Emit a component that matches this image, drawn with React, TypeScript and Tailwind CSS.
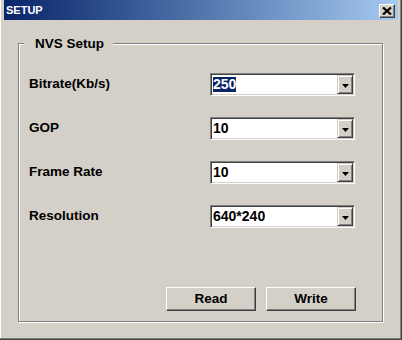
import React from "react";

const font = { fontFamily: '"Liberation Sans", Arial, sans-serif' };

function Combo({ value, selected }: { value: string; selected?: boolean }) {
  return (
    <div className="flex h-[23px] w-[145px] bg-white border border-t-[#808080] border-l-[#808080] border-b-white border-r-white shadow-[inset_1px_1px_0_#404040,inset_-1px_-1px_0_#d4d0c8] p-[1px]">
      <div className="flex flex-1 items-center pl-[1px]">
        <span
          className={
            selected
              ? "bg-[#0a246a] text-white text-[14px] font-bold leading-[15px]"
              : "text-black text-[14px] font-bold leading-[15px]"
          }
        >
          {value}
        </span>
      </div>
      <div className="flex w-[16px] items-center justify-center bg-[#d4d0c8] border border-t-[#d4d0c8] border-l-[#d4d0c8] border-b-[#404040] border-r-[#404040] shadow-[inset_1px_1px_0_#fff,inset_-1px_-1px_0_#808080]">
        <svg width="7" height="4" viewBox="0 0 7 4" className="mt-[2px]">
          <path d="M0 0H7L3.5 4Z" fill="#000" />
        </svg>
      </div>
    </div>
  );
}

function Btn({ label }: { label: string }) {
  return (
    <div className="flex h-[24px] w-[90px] items-center justify-center bg-[#d4d0c8] border border-t-white border-l-white border-b-[#404040] border-r-[#404040] shadow-[inset_-1px_-1px_0_#808080] text-[13.5px] font-bold text-black">
      {label}
    </div>
  );
}

export default function App() {
  const rows: { label: string; value: string; selected?: boolean }[] = [
    { label: "Bitrate(Kb/s)", value: "250", selected: true },
    { label: "GOP", value: "10" },
    { label: "Frame Rate", value: "10" },
    { label: "Resolution", value: "640*240" },
  ];
  return (
    <div
      style={font}
      className="flex h-[340px] w-[402px] flex-col bg-[#d4d0c8] pl-[4px] pr-[3px] pb-[3px] border-r border-b border-[#404040] shadow-[inset_-1px_-1px_0_#808080,inset_1px_0_0_#fff]"
    >
      <div className="flex h-[20px] items-start justify-between bg-gradient-to-r from-[#0a246a] to-[#a6caf0] pl-[2px] pr-[3px]">
        <span className="pt-[3px] text-[11px] font-bold leading-[14px] text-white">SETUP</span>
        <div className="mt-[4px] flex h-[14px] w-[16px] items-center justify-center bg-[#d4d0c8] border border-t-white border-l-white border-b-[#404040] border-r-[#404040] shadow-[inset_-1px_-1px_0_#808080]">
          <svg width="10" height="8" viewBox="0 0 10 8">
            <path d="M1 0.5L9 7.5M9 0.5L1 7.5" stroke="#000" strokeWidth="2.2" />
          </svg>
        </div>
      </div>
      <div className="flex flex-1 flex-col pt-[23px] pl-[14px] pr-[15px] pb-[14px]">
        <div className="relative flex flex-1 flex-col border border-[#808080] shadow-[inset_1px_1px_0_#fff,1px_1px_0_#fff] pl-[10px] pr-[26px] pt-[29px] pb-[10px]">
          <span className="absolute left-[5px] top-[-8px] bg-[#d4d0c8] pl-[11px] pr-[9px] text-[13.5px] font-bold leading-[16px] text-black">
            NVS Setup
          </span>
          <div className="flex flex-col gap-[21px]">
            {rows.map((r) => (
              <div key={r.label} className="grid grid-cols-[181px_145px] items-center">
                <span className="text-[13.5px] font-bold text-black">{r.label}</span>
                <Combo value={r.value} selected={r.selected} />
              </div>
            ))}
          </div>
          <div className="mt-auto flex justify-end gap-[10px]">
            <Btn label="Read" />
            <Btn label="Write" />
          </div>
        </div>
      </div>
    </div>
  );
}
